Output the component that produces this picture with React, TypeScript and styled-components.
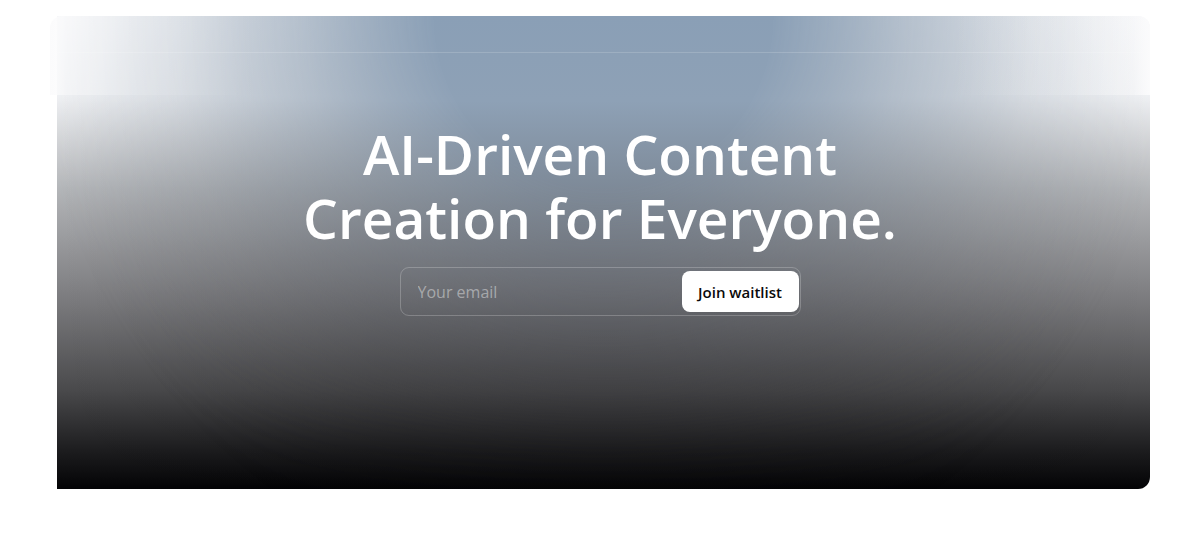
import React from "react";
import styled, { createGlobalStyle } from "styled-components";

const Global = createGlobalStyle`
  html, body { margin: 0; padding: 0; background: #ffffff; }
  body { font-family: "Open Sans", "Noto Sans", sans-serif; }
  * { box-sizing: border-box; }
`;

const Page = styled.div`
  width: 1200px;
  height: 558px;
  padding: 16px 50px 0 50px;
  background: #ffffff;
`;

const Frame = styled.div`
  position: relative;
  width: 1100px;
  height: 473px;
`;

const Hero = styled.section`
  position: relative;
  margin-left: 7px;
  height: 473px;
  border-radius: 0 12px 12px 0;
  overflow: hidden;
  background:
    linear-gradient(to right, rgba(0,0,0,0) 0%, rgba(0,0,0,0.1) 30%, rgba(0,0,0,0.1) 70%, rgba(0,0,0,0) 100%),
    linear-gradient(to bottom, #fbfbfc 0%, #f2f3f5 17%, #b2b4b7 37%, #808083 58%, #4a4a4c 79%, #1c1c1e 92%, #030305 100%);
  display: flex;
  flex-direction: column;
  align-items: center;
  padding: 106px 7px 0 0;

  &::before {
    content: "";
    position: absolute;
    inset: 0;
    background: linear-gradient(to bottom,
      rgb(138,159,182) 0%,
      rgb(142,161,182) 18%,
      rgb(125,137,151) 37%,
      rgb(100,104,112) 58%,
      rgb(62,62,66) 79%,
      rgb(10,10,12) 100%);
    -webkit-mask-image: radial-gradient(ellipse 55% 130% at 50% 0%, #000 0%, #000 28%, rgba(0,0,0,0.55) 50%, rgba(0,0,0,0.2) 72%, rgba(0,0,0,0) 95%);
    mask-image: radial-gradient(ellipse 55% 130% at 50% 0%, #000 0%, #000 28%, rgba(0,0,0,0.55) 50%, rgba(0,0,0,0.2) 72%, rgba(0,0,0,0) 95%);
    pointer-events: none;
  }

  & > * { position: relative; z-index: 1; }
`;

const TopGlow = styled.div`
  position: absolute;
  top: 0;
  left: 0;
  right: 0;
  height: 79px;
  border-radius: 12px 12px 0 0;
  pointer-events: none;
  background:
    linear-gradient(to right,
      rgba(251,251,252,1) 0%,
      rgba(251,251,252,0.45) 1.5%,
      rgba(245,247,250,0.15) 8%,
      rgba(230,236,242,0) 18%,
      rgba(230,236,242,0) 82%,
      rgba(245,247,250,0.15) 92%,
      rgba(251,251,252,0.45) 98.5%,
      rgba(251,251,252,1) 100%);
`;

const Rule = styled.div`
  position: absolute;
  top: 36px;
  left: 7px;
  right: 6px;
  height: 1px;
  background: rgba(255, 255, 255, 0.16);
`;

const Title = styled.h1`
  margin: 0;
  color: #ffffff;
  font-family: "Open Sans", "Noto Sans", sans-serif;
  font-weight: 600;
  font-size: 55px;
  line-height: 64px;
  letter-spacing: 0;
  text-align: center;
`;

const Form = styled.form`
  margin-top: 17px;
  width: 401px;
  height: 49px;
  border: 1px solid rgba(255, 255, 255, 0.22);
  border-radius: 9px;
  display: flex;
  align-items: center;
  padding: 0 1px 0 15px;
`;

const Email = styled.input`
  flex: 1;
  min-width: 0;
  background: transparent;
  border: none;
  outline: none;
  color: #ffffff;
  font-family: "Open Sans", "Noto Sans", sans-serif;
  font-size: 16px;
  &::placeholder { color: rgba(255, 255, 255, 0.42); }
`;

const JoinButton = styled.button`
  height: 41px;
  width: 117px;
  border: none;
  border-radius: 8px;
  background: #ffffff;
  color: #0a0a0a;
  font-family: "Open Sans", "Noto Sans", sans-serif;
  font-weight: 600;
  font-size: 15px;
  cursor: pointer;
`;

export default function App() {
  return (
    <>
      <Global />
      <Page>
        <Frame>
          <Hero>
            <Title>
              AI-Driven Content
              <br />
              Creation for Everyone.
            </Title>
            <Form onSubmit={(e) => e.preventDefault()}>
              <Email placeholder="Your email" />
              <JoinButton type="submit">Join waitlist</JoinButton>
            </Form>
          </Hero>
          <TopGlow />
          <Rule />
        </Frame>
      </Page>
    </>
  );
}
